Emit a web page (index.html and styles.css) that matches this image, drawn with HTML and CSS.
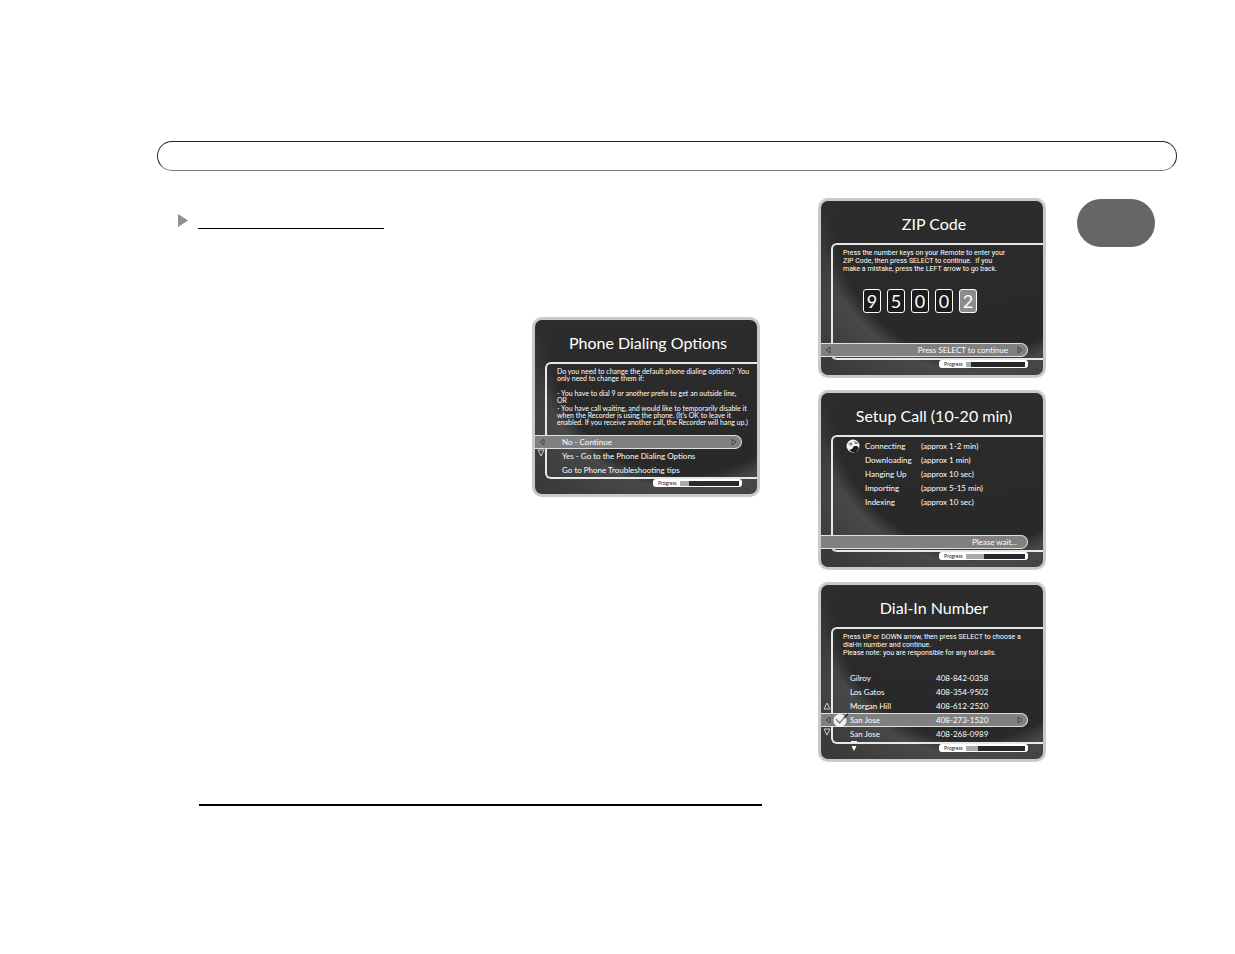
FILE: index.html
```
<!DOCTYPE html>
<html lang="en">
<head>
    <meta charset="UTF-8">
    <meta name="viewport" content="width=device-width, initial-scale=1.0">
    <title>Guided Setup</title>
    <link rel="stylesheet" href="styles.css">
</head>
<body>

    <div class="page">
        <header class="page-header"></header>

        <div class="content">
            <main class="main">
                <div class="section-heading">
                    <svg class="marker" viewBox="0 0 10 13"><path d="M0 0L10 6.500L0 13Z" fill="#909090"/></svg>
                    <div class="heading-line"></div>
                </div>

                <!-- Phone dialing options -->
                <section class="screen phone-screen">
                    <h2>Phone Dialing Options</h2>
                    <div class="panel">
                        <div class="message tight">
                            <p>Do you need to change the default phone dialing options?&nbsp; You<br>only need to change them if:</p>
                            <p class="spaced">- You have to dial 9 or another prefix to get an outside line,<br>OR</p>
                            <p>- You have call waiting, and would like to temporarily disable it<br>when the Recorder is using the phone. (It's OK to leave it<br>enabled. If you receive another call, the Recorder will hang up.)</p>
                        </div>
                        <div class="options">
                            <button type="button" class="row bar">
                                <svg class="arrow left" viewBox="0 0 6 8"><path d="M5 1L1 4L5 7Z"/></svg>
                                <span class="name">No - Continue</span>
                                <svg class="arrow right" viewBox="0 0 6 8"><path d="M1 1L5 4L1 7Z"/></svg>
                            </button>
                            <button type="button" class="row"><span class="name">Yes - Go to the Phone Dialing Options</span></button>
                            <button type="button" class="row"><span class="name">Go to Phone Troubleshooting tips</span></button>
                            <svg class="scroll down" viewBox="0 0 8 8"><path d="M1 1H7L4 7Z"/></svg>
                        </div>
                    </div>
                    <div class="progress">
                        <label for="phoneProgress">Progress</label>
                        <progress id="phoneProgress" value="15" max="100"></progress>
                    </div>
                </section>

                <div class="end-line"></div>
            </main>

            <aside class="screens">
                <!-- ZIP code -->
                <section class="screen">
                    <h2>ZIP Code</h2>
                    <div class="panel">
                        <div class="message">
                            <p>Press the number keys on your Remote to enter your<br>ZIP Code, then press SELECT to continue.&nbsp; If you<br>make a mistake, press the LEFT arrow to go back.</p>
                        </div>
                        <div class="digits">
                            <input type="text" maxlength="1" value="9" aria-label="Digit 1">
                            <input type="text" maxlength="1" value="5" aria-label="Digit 2">
                            <input type="text" maxlength="1" value="0" aria-label="Digit 3">
                            <input type="text" maxlength="1" value="0" aria-label="Digit 4">
                            <input type="text" maxlength="1" value="2" aria-label="Digit 5" class="active">
                        </div>
                        <button type="button" class="row bar bottom">
                            <svg class="arrow left" viewBox="0 0 6 8"><path d="M5 1L1 4L5 7Z"/></svg>
                            <span class="action">Press SELECT to continue</span>
                            <svg class="arrow right" viewBox="0 0 6 8"><path d="M1 1L5 4L1 7Z"/></svg>
                        </button>
                    </div>
                    <div class="progress">
                        <label for="zipProgress">Progress</label>
                        <progress id="zipProgress" value="9" max="100"></progress>
                    </div>
                </section>

                <!-- Setup call -->
                <section class="screen">
                    <h2>Setup Call (10-20 min)</h2>
                    <div class="panel">
                        <div class="call">
                            <svg class="globe" viewBox="0 0 14 14">
                                <circle cx="7" cy="7" r="6.500" fill="#f4f4f4"/>
                                <path d="M2 5L5 3L7 5L5 7Z" fill="#999"/>
                                <path d="M8 2L11 3L12 5L9 5Z" fill="#888"/>
                                <path d="M8 7L11 7L13 9L10 13L6 13L3 11L6 10Z" fill="#1c1c1c"/>
                            </svg>
                            <table class="steps">
                                <tr><td>Connecting</td><td>(approx 1-2 min)</td></tr>
                                <tr><td>Downloading</td><td>(approx 1 min)</td></tr>
                                <tr><td>Hanging Up</td><td>(approx 10 sec)</td></tr>
                                <tr><td>Importing</td><td>(approx 5-15 min)</td></tr>
                                <tr><td>Indexing</td><td>(approx 10 sec)</td></tr>
                            </table>
                        </div>
                        <div class="row bar bottom">
                            <span class="action wait">Please wait...</span>
                        </div>
                    </div>
                    <div class="progress">
                        <label for="callProgress">Progress</label>
                        <progress id="callProgress" value="31" max="100"></progress>
                    </div>
                </section>

                <!-- Dial-in number -->
                <section class="screen">
                    <h2>Dial-In Number</h2>
                    <div class="panel">
                        <div class="message">
                            <p>Press UP or DOWN arrow, then press SELECT to choose a<br>dial-in number and continue.<br>Please note: you are responsible for any toll calls.</p>
                        </div>
                        <div class="options numbers">
                            <button type="button" class="row"><span class="name">Gilroy</span><span>408-842-0358</span></button>
                            <button type="button" class="row"><span class="name">Los Gatos</span><span>408-354-9502</span></button>
                            <button type="button" class="row"><span class="name">Morgan Hill</span><span>408-612-2520</span></button>
                            <button type="button" class="row bar">
                                <svg class="arrow left" viewBox="0 0 6 8"><path d="M5 1L1 4L5 7Z"/></svg>
                                <svg class="check" viewBox="0 0 16 14">
                                    <circle cx="7" cy="7.500" r="6.500" fill="#f4f4f4"/>
                                    <path d="M3 6L6.500 10L11 5" fill="none" stroke="#888" stroke-width="1.500"/>
                                    <path d="M11 5L15 1" fill="none" stroke="#222" stroke-width="1.500"/>
                                </svg>
                                <span class="name">San Jose</span><span>408-273-1520</span>
                                <svg class="arrow right" viewBox="0 0 6 8"><path d="M1 1L5 4L1 7Z"/></svg>
                            </button>
                            <button type="button" class="row"><span class="name">San Jose</span><span>408-268-0989</span></button>
                            <svg class="scroll up" viewBox="0 0 8 8"><path d="M1 7H7L4 1Z"/></svg>
                            <svg class="scroll down" viewBox="0 0 8 8"><path d="M1 1H7L4 7Z"/></svg>
                            <svg class="more" viewBox="0 0 6 10"><path d="M0 0H6V1H0ZM0.500 5H5.500L3 10Z" fill="#fff"/></svg>
                        </div>
                    </div>
                    <div class="progress">
                        <label for="dialProgress">Progress</label>
                        <progress id="dialProgress" value="20" max="100"></progress>
                    </div>
                </section>
            </aside>

            <div class="page-tab"></div>
        </div>
    </div>

</body>
</html>
```
FILE: styles.css
```
* {
    box-sizing: border-box;
}

body {
    margin: 0;
    background-color: #fff;
    font-family: Lato, "Liberation Sans", Arial, sans-serif;
}

.page {
    padding: 141px 58px 40px 157px;
}

.page-header {
    height: 30px;
    border: 1px solid #222;
    border-bottom-color: #777;
    border-radius: 15px;
}

.content {
    display: grid;
    grid-template-columns: minmax(0, 1fr) 228px 78px;
    column-gap: 31px;
    padding-right: 22px;
    margin-top: 27px;
}

/* Left column */
.main {
    display: flex;
    flex-direction: column;
    padding: 16px 25px 0 21px;
}

.section-heading {
    display: flex;
    height: 15px;
    gap: 10px;
}

.marker {
    width: 10px;
    height: 13px;
}

.heading-line {
    width: 186px;
    border-bottom: 1px solid #000;
}

.phone-screen {
    align-self: flex-end;
    margin: 88px 2px 0 0;
}

.end-line {
    height: 2px;
    margin: 307px 0 0 21px;
    background-color: #000;
}

.screens {
    display: flex;
    flex-direction: column;
    gap: 12px;
}

.page-tab {
    height: 48px;
    margin-top: 1px;
    border-radius: 24px;
    background-color: #666;
}

/* TV screens */
.screen {
    width: 228px;
    height: 180px;
    overflow: hidden;
    border: 3px solid #c9c9c9;
    border-radius: 10px;
    color: #fff;
    background:
        linear-gradient(#2c2c2c 0, transparent 60%),
        radial-gradient(circle at 150px 20px, #2a2a2a 0, #292929 135px, #484848 150px, #3a3a3a 200px);
    display: flex;
    flex-direction: column;
}

h2 {
    margin: 0;
    height: 42px;
    padding-left: 4px;
    line-height: 46px;
    font-size: 16px;
    font-weight: 400;
    text-align: center;
    flex-shrink: 0;
}

.panel {
    display: flex;
    flex-direction: column;
    height: 117px;
    margin-left: 10px;
    border: 2px solid #e8e8e8;
    border-right: 0;
    border-radius: 6px 0 0 6px;
    flex-shrink: 0;
}

.message {
    padding: 4px 0 0 10px;
    font-family: Roboto, "Liberation Sans", Arial, sans-serif;
    font-size: 7px;
    line-height: 8px;
    white-space: nowrap;
}

.message p {
    margin: 0;
}

.tight {
    font-family: inherit;
    line-height: 7px;
}

.tight .spaced {
    margin: 8px 0 1px;
}

.options {
    position: relative;
    display: flex;
    flex-direction: column;
    margin-top: auto;
}

.row {
    display: flex;
    align-items: center;
    height: 14px;
    padding: 0 0 0 15px;
    border: 0;
    background: none;
    color: #fff;
    font-family: inherit;
    font-size: 8px;
    line-height: 10px;
    text-align: left;
}

.bar {
    margin: 0 15px 0 -12px;
    padding: 0 4px;
    border: 1px solid #e0e0e0;
    border-left: 0;
    border-radius: 0 7px 7px 0;
    background-color: #808080;
}

.bar .name {
    margin-left: 17px;
}

.bottom {
    margin-top: auto;
    margin-bottom: 1px;
}

.arrow {
    width: 6px;
    height: 8px;
    fill: none;
    stroke: #444;
}

.arrow.right {
    margin-left: auto;
}

.action {
    margin-left: auto;
}

.action + .arrow.right {
    margin-left: 9px;
}

.wait {
    margin-right: 6px;
}

.scroll {
    position: absolute;
    left: -10px;
    width: 8px;
    height: 8px;
    fill: none;
    stroke: #ccc;
}

.phone-screen .scroll {
    top: 14px;
}

/* ZIP code digits */
.digits {
    display: flex;
    gap: 6px;
    padding: 16px 0 0 30px;
}

.digits input {
    width: 18px;
    height: 24px;
    padding: 0;
    border: 1px solid #fff;
    border-radius: 3px;
    background-color: #1c1c1c;
    color: #fff;
    font-family: inherit;
    font-size: 18px;
    text-align: center;
}

.digits .active {
    background-color: #8c8c8c;
}

/* Setup call */
.call {
    display: flex;
    align-items: flex-start;
    gap: 5px;
    padding: 2px 0 0 13px;
}

.globe {
    width: 14px;
    height: 14px;
}

.steps {
    border-collapse: collapse;
    font-size: 8px;
    line-height: 14px;
}

.steps td {
    padding: 0;
}

.steps td:first-child {
    width: 56px;
}

/* Dial-in numbers */
.numbers {
    margin-bottom: 1px;
}

.numbers .row {
    padding-left: 17px;
}

.numbers .row .name {
    width: 86px;
}

.numbers .bar {
    padding-left: 4px;
}

.numbers .check {
    width: 16px;
    height: 14px;
    margin-left: 2px;
}

.numbers .bar .name {
    margin-left: 1px;
}

.numbers .up {
    top: 31px;
}

.numbers .down {
    top: 57px;
}

.more {
    position: absolute;
    left: 18px;
    bottom: -10px;
    width: 6px;
    height: 10px;
}

/* Progress */
.progress {
    display: flex;
    align-items: center;
    align-self: flex-end;
    width: 89px;
    height: 8px;
    margin-right: 15px;
    padding: 0 3px 0 5px;
    border-radius: 3px;
    background-color: #fff;
    color: #222;
    flex-shrink: 0;
}

.progress label {
    width: 22px;
    font-size: 5px;
    line-height: 8px;
}

progress {
    appearance: none;
    flex: 1;
    min-width: 0;
    height: 5px;
    border: 0;
}

progress::-webkit-progress-bar {
    background-color: #2a2a2a;
}

progress::-webkit-progress-value {
    background-color: #aaa;
}
```
